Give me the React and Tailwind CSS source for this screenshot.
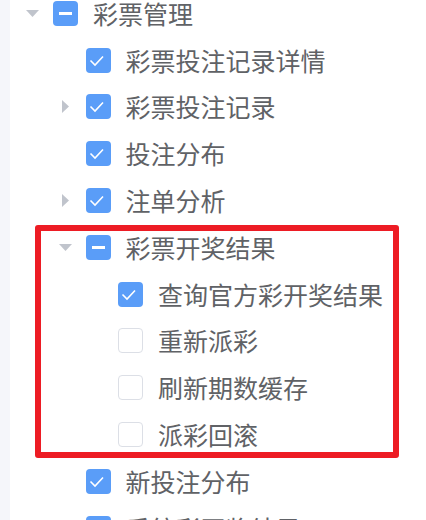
import React from "react";

const rows = [
    { label: "彩票管理", level: 1, arrow: "down", state: "half" },
    { label: "彩票投注记录详情", level: 2, state: "on" },
    { label: "彩票投注记录", level: 2, arrow: "right", state: "on" },
    { label: "投注分布", level: 2, state: "on" },
    { label: "注单分析", level: 2, arrow: "right", state: "on" },
    { label: "彩票开奖结果", level: 2, arrow: "down", state: "half" },
    { label: "查询官方彩开奖结果", level: 3, state: "on" },
    { label: "重新派彩", level: 3, state: "off" },
    { label: "刷新期数缓存", level: 3, state: "off" },
    { label: "派彩回滚", level: 3, state: "off" },
    { label: "新投注分布", level: 2, state: "on" },
    { label: "系统彩开奖结果", level: 2, state: "on" },
];

// indent per level, measured from the strip edge
const indent = { 1: "pl-[12px]", 2: "pl-[44.5px]", 3: "pl-[77px]" };

function Caret({ dir }) {
    if (dir === "down") {
        return (
            <svg width="13" height="7" viewBox="0 0 13 7">
                <path d="M0 0 L13 0 L6.5 7 Z" fill="#c0c4cc" />
            </svg>
        );
    }
    return (
        <svg width="7" height="13" viewBox="0 0 7 13">
            <path d="M0 0 L7 6.5 L0 13 Z" fill="#c0c4cc" />
        </svg>
    );
}

function Box({ state }) {
    if (state === "off") {
        return <span className="w-[25px] h-[25px] rounded-[4px] border border-[#dcdfe6] bg-white shrink-0" />;
    }
    return (
        <span className="w-[25px] h-[25px] rounded-[4px] bg-[#5a9df8] shrink-0 flex items-center justify-center">
            {state === "half" ? (
                <span className="w-[13px] h-[3px] bg-white" />
            ) : (
                <svg width="25" height="25" viewBox="0 0 25 25">
                    <path d="M4.5 12.5 L9 17 L17 8.5" fill="none" stroke="#fff" strokeWidth="1.6" />
                </svg>
            )}
        </span>
    );
}

export default function App() {
    return (
        <div className="relative w-[426px] h-[520px] overflow-hidden bg-white flex font-['Noto_Sans_CJK_SC',sans-serif]">
            <div className="w-[10px] shrink-0 bg-[#f5f6fa]" />
            <div className="flex-1 -mt-[10px]">
                {rows.map((row) => (
                    <div key={row.label} className={`h-[46.8px] flex items-center ${indent[row.level]}`}>
                        <span className="w-[21px] flex items-center justify-center shrink-0">
                            {row.arrow && <Caret dir={row.arrow} />}
                        </span>
                        <span className="ml-[10px] mr-[15px] flex">
                            <Box state={row.state} />
                        </span>
                        <span className="text-[25px] leading-none text-[#606266] whitespace-nowrap">{row.label}</span>
                    </div>
                ))}
            </div>
            <div className="absolute left-[35px] top-[225px] w-[364px] h-[233px] border-[6px] border-[#ed1c24] rounded-[3px]" />
        </div>
    );
}
